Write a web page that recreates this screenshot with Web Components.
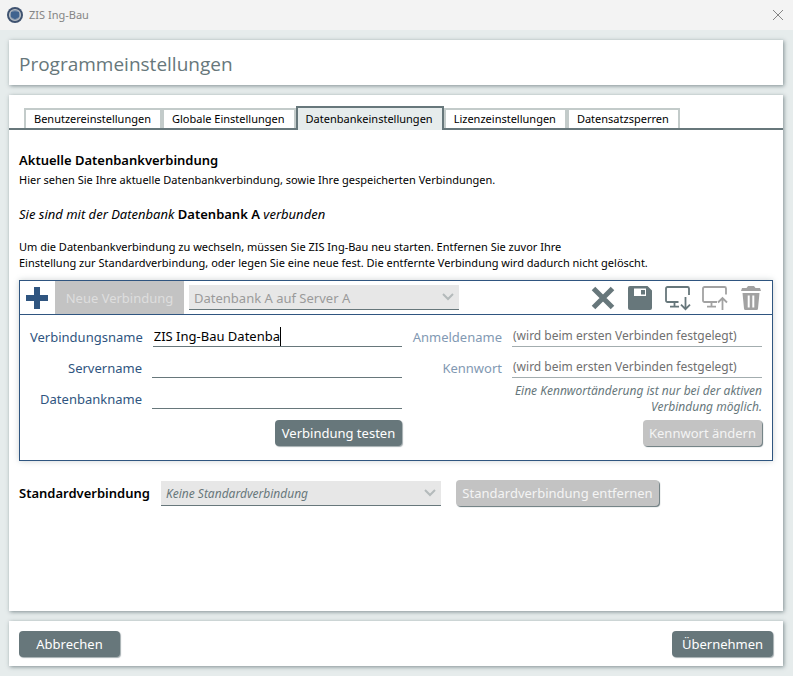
<!DOCTYPE html>
<html lang="de">
<head>
<meta charset="utf-8">
<title>ZIS Ing-Bau</title>
<style>
    :root {
        --slate: #67777b;
        --blue: #2f5580;
        --surface: #e6ecec;
        --disabled: #c3c3c3;
    }
    html, body { height: 100%; }
    body {
        margin: 0;
        background: var(--surface);
        color: #000;
        font: 11px/16px "Noto Sans", "Open Sans", sans-serif;
    }
</style>
</head>
<body>
<zis-app></zis-app>
<script>
const icons = {
    plus: '<path d="M9 1h6v8h8v6h-8v8H9v-8H1V9h8z" fill="currentColor"/>',
    cross: '<path d="M2.500 2.500l19 19M21.500 2.500l-19 19" stroke="currentColor" stroke-width="5" fill="none"/>',
    save: '<path fill="currentColor" fill-rule="evenodd" d="M2 0h17.500L24 4.500V22a2 2 0 0 1-2 2H2a2 2 0 0 1-2-2V2a2 2 0 0 1 2-2zM6 2.500V10h12V2.500zM13 4h4v4.500h-4z"/>',
    download: '<path d="M13.500 16H2.500a1.500 1.500 0 0 1-1.500-1.500v-12A1.500 1.500 0 0 1 2.500 1h20A1.500 1.500 0 0 1 24 2.500V9M9.500 16v4.500M5 20.700h9M20.500 11v12M16 18.700l4.500 4.500 4.500-4.500" fill="none" stroke="currentColor" stroke-width="1.800"/>',
    upload: '<path d="M15 16H2.500a1.500 1.500 0 0 1-1.500-1.500v-12A1.500 1.500 0 0 1 2.500 1h20A1.500 1.500 0 0 1 24 2.500V8.500M9.500 16v4.500M5 20.700h9M20.500 24V12M16 16.500l4.500-4.500 4.500 4.500" fill="none" stroke="currentColor" stroke-width="1.800"/>',
    trash: '<path fill="currentColor" fill-rule="evenodd" d="M9 0h6l1.500 2H21l1 3H2l1-3h4.500zM3.500 7h17L19 22.500a1.500 1.500 0 0 1-1.500 1.500h-11A1.500 1.500 0 0 1 5 22.500zM8.700 9.500v12h2v-12zM13.300 9.500v12h2v-12z"/>'
};

class ZisElement extends HTMLElement {
    constructor() {
        super();
        this.attachShadow({ mode: 'open' });
    }

    connectedCallback() {
        this.shadowRoot.innerHTML = `
            <style>
                *, *::before { box-sizing: border-box; }
                button, input, select { font: inherit; margin: 0; }
            </style>
            ${this.render()}
        `;
    }

    attr(name) {
        return this.getAttribute(name) || '';
    }

    get disabled() {
        return this.hasAttribute('disabled') ? 'disabled' : '';
    }
}

class ZisTitlebar extends ZisElement {
    render() {
        return `
            <style>
                :host {
                    display: flex;
                    align-items: center;
                    gap: 6px;
                    height: 30px;
                    padding: 0 9px 0 7px;
                    background: #f3f3f3;
                    color: #858585;
                }
                .title { flex: 1; }
                button {
                    display: flex;
                    padding: 0;
                    border: 0;
                    background: none;
                    color: #858585;
                }
            </style>
            <svg width="16" height="16" viewBox="0 0 16 16">
                <circle cx="8" cy="8" r="8" fill="#3e5270"/>
                <circle cx="8" cy="8" r="5.500" fill="#7f93ab" stroke="#b9bfc4" stroke-width="1.200"/>
                <path d="M4 5l4-.8 4 .8v5L8 12.200 4 10z" fill="#3f638f"/>
            </svg>
            <span class="title"><slot></slot></span>
            <button aria-label="Schließen">
                <svg width="12" height="12" viewBox="0 0 12 12">
                    <path d="M1 1l10 10M11 1L1 11" stroke="currentColor"/>
                </svg>
            </button>
        `;
    }
}

class ZisCard extends ZisElement {
    render() {
        return `
            <style>
                :host {
                    display: block;
                    background: #fff;
                    box-shadow: 1px 1px 4px #67777bcc;
                }
            </style>
            <slot></slot>
        `;
    }
}

class ZisTab extends ZisElement {
    render() {
        const selected = this.hasAttribute('selected');
        return `
            <style>
                :host { display: block; }
                :host([selected]) { margin-bottom: -2px; }
                button {
                    display: block;
                    height: 20px;
                    padding: 0 9px 0 8px;
                    border: 2px solid #c3cbca;
                    border-bottom: 0;
                    background: #fff;
                    color: #000;
                    line-height: 18px;
                }
                :host([selected]) button {
                    height: 24px;
                    border-color: var(--slate);
                    background: var(--surface);
                }
            </style>
            <button role="tab" aria-selected="${selected}"><slot></slot></button>
        `;
    }
}

class ZisTabs extends ZisElement {
    render() {
        return `
            <style>
                :host { display: block; }
                div {
                    display: flex;
                    align-items: flex-end;
                    height: 35px;
                    padding: 0 15px;
                    border-bottom: 2px solid var(--slate);
                }
            </style>
            <div role="tablist"><slot></slot></div>
        `;
    }
}

class ZisButton extends ZisElement {
    render() {
        return `
            <style>
                :host {
                    display: inline-block;
                    font-size: 13px;
                }
                button {
                    display: block;
                    width: 100%;
                    height: 26px;
                    padding: 0 5px;
                    border: 0;
                    border-radius: 4px;
                    background: var(--slate);
                    box-shadow: 1px 1px 1px #67777b99;
                    color: #fff;
                    white-space: nowrap;
                }
                button:disabled {
                    background: var(--disabled);
                    box-shadow: 1px 1px 1px var(--slate);
                    color: #f4f4f4;
                }
                :host([flat]) button {
                    height: 33px;
                    border-radius: 0;
                    box-shadow: none;
                    color: #dedede;
                }
            </style>
            <button ${this.disabled}><slot></slot></button>
        `;
    }
}

class ZisIconButton extends ZisElement {
    render() {
        return `
            <style>
                :host { display: block; color: var(--slate); }
                :host([disabled]) { color: #a2a2a2; }
                :host([accent]) { color: var(--blue); }
                button {
                    display: block;
                    padding: 0;
                    border: 0;
                    background: none;
                    color: inherit;
                }
                svg { display: block; overflow: visible; }
            </style>
            <button aria-label="${this.attr('label')}" ${this.disabled}>
                <svg width="24" height="24" viewBox="0 0 24 24">${icons[this.attr('icon')]}</svg>
            </button>
        `;
    }
}

class ZisField extends ZisElement {
    render() {
        const editing = this.hasAttribute('editing');
        return `
            <style>
                :host {
                    --label-width: 112px;
                    display: flex;
                    align-items: center;
                    gap: 10px;
                    height: 31px;
                    color: var(--blue);
                    font-size: 13px;
                }
                label {
                    flex: 0 0 var(--label-width);
                    text-align: right;
                    white-space: nowrap;
                }
                .box {
                    display: flex;
                    flex: 1;
                    align-items: center;
                    min-width: 0;
                    height: 20px;
                    border-bottom: 1px solid var(--slate);
                }
                input {
                    flex: 1;
                    min-width: 0;
                    height: 19px;
                    padding: 0 0 0 1px;
                    border: 0;
                    outline: 0;
                    background: none;
                    color: #000;
                }
                input::placeholder { color: #707070; opacity: 1; }
                :host([disabled]) label { color: #8299b3; }
                :host([disabled]) input { padding-bottom: 2px; font-size: 12px; }
                :host([disabled]) .box { border-color: #a3adaf; }
                :host([editing]) input {
                    flex: none;
                    field-sizing: content;
                }
                .caret {
                    width: 1px;
                    height: 19px;
                    background: #000;
                }
            </style>
            <label for="input">${this.attr('label')}</label>
            <div class="box">
                <input id="input" value="${this.attr('value')}" placeholder="${this.attr('placeholder')}" ${this.disabled}>
                ${editing ? '<span class="caret"></span>' : ''}
            </div>
        `;
    }
}

class ZisSelect extends ZisElement {
    render() {
        const label = this.attr('label');
        return `
            <style>
                :host {
                    display: flex;
                    align-items: center;
                    gap: 11px;
                }
                label { font-size: 13px; font-weight: 600; }
                .box {
                    display: grid;
                    flex: 1;
                    align-items: center;
                    height: 25px;
                    border-bottom: 1px solid var(--slate);
                    background: #e7e7e7;
                }
                select, svg { grid-area: 1 / 1; }
                select {
                    width: 100%;
                    height: 24px;
                    padding: 2px 24px 0 5px;
                    border: 0;
                    background: none;
                    color: var(--select-color, #9a9a9a);
                    font-style: var(--select-style, normal);
                    opacity: 1;
                    appearance: none;
                }
                svg { justify-self: end; margin-right: 5px; }
            </style>
            ${label ? `<label for="select">${label}</label>` : ''}
            <div class="box">
                <select id="select" ${label ? '' : 'aria-label="Verbindung"'} ${this.disabled}>
                    <option>${this.attr('value')}</option>
                </select>
                <svg width="12" height="8" viewBox="0 0 12 8">
                    <path d="M1 1l5 5 5-5" fill="none" stroke="#b4babb" stroke-width="2"/>
                </svg>
            </div>
        `;
    }
}

class ZisConnectionEditor extends ZisElement {
    render() {
        return `
            <style>
                :host {
                    display: block;
                    border: 1px solid var(--blue);
                    box-shadow: 0 0 6px #67777b55;
                }
                header {
                    display: flex;
                    align-items: center;
                    height: 34px;
                    padding: 0 9px 0 5px;
                    border-bottom: 1px solid var(--blue);
                }
                .new { flex: 0 0 129px; margin: 0 5px 0 6px; }
                zis-select { flex: 0 0 270px; font-size: 13px; }
                .tools {
                    display: flex;
                    gap: 13px;
                    margin-left: auto;
                }
                .form {
                    display: grid;
                    grid-template-columns: 372fr 350fr;
                    gap: 10px;
                    padding: 6px 10px 14px;
                }
                .right zis-field { --label-width: 90px; }
                .column {
                    display: flex;
                    flex-direction: column;
                }
                .column zis-button { align-self: flex-end; margin-top: auto; }
                .left zis-button { width: 127px; }
                .right zis-button { width: 119px; }
                p {
                    margin: 0 0 5px auto;
                    max-width: 250px;
                    color: var(--slate);
                    font-size: 12px;
                    font-style: italic;
                    text-align: right;
                }
            </style>
            <header>
                <zis-icon-button icon="plus" label="Hinzufügen" accent></zis-icon-button>
                <zis-button class="new" flat disabled>Neue Verbindung</zis-button>
                <zis-select value="Datenbank A auf Server A" disabled></zis-select>
                <div class="tools">
                    <zis-icon-button icon="cross" label="Verwerfen"></zis-icon-button>
                    <zis-icon-button icon="save" label="Speichern"></zis-icon-button>
                    <zis-icon-button icon="download" label="Importieren"></zis-icon-button>
                    <zis-icon-button icon="upload" label="Exportieren" disabled></zis-icon-button>
                    <zis-icon-button icon="trash" label="Löschen" disabled></zis-icon-button>
                </div>
            </header>
            <div class="form">
                <div class="column left">
                    <zis-field label="Verbindungsname" value="ZIS Ing-Bau Datenba" editing></zis-field>
                    <zis-field label="Servername"></zis-field>
                    <zis-field label="Datenbankname"></zis-field>
                    <zis-button>Verbindung testen</zis-button>
                </div>
                <div class="column right">
                    <zis-field label="Anmeldename" placeholder="(wird beim ersten Verbinden festgelegt)" disabled></zis-field>
                    <zis-field label="Kennwort" placeholder="(wird beim ersten Verbinden festgelegt)" disabled></zis-field>
                    <p>Eine Kennwortänderung ist nur bei der aktiven Verbindung möglich.</p>
                    <zis-button disabled>Kennwort ändern</zis-button>
                </div>
            </div>
        `;
    }
}

class ZisApp extends ZisElement {
    render() {
        return `
            <style>
                :host {
                    display: flex;
                    flex-direction: column;
                    min-height: 100%;
                }
                main {
                    display: flex;
                    flex: 1;
                    flex-direction: column;
                    gap: 10px;
                    padding: 10px 10px 10px 9px;
                }
                h1 {
                    margin: 0;
                    padding: 3px 10px 0;
                    color: var(--slate);
                    font-family: "Open Sans", sans-serif;
                    font-size: 19px;
                    font-weight: 400;
                    line-height: 42px;
                }
                .settings { flex: 1; }
                .content { padding: 20px 10px; }
                h2 {
                    margin: 0;
                    font-size: 13px;
                    font-weight: 600;
                    line-height: 20px;
                }
                p { margin: 0; line-height: 20px; }
                .status {
                    margin: 14px 0 15px;
                    font-size: 13px;
                    font-style: italic;
                }
                .status b { font-style: normal; font-weight: 600; }
                .hint { margin-bottom: 9px; line-height: 16px; }
                .default {
                    display: flex;
                    align-items: center;
                    gap: 15px;
                    margin-top: 19px;
                }
                .default zis-select {
                    --select-color: var(--slate);
                    --select-style: italic;
                    flex: 0 0 422px;
                    font-size: 12px;
                }
                .default zis-button { flex: 0 0 203px; }
                .actions {
                    display: flex;
                    justify-content: space-between;
                    padding: 10px 10px 9px;
                }
                .actions zis-button { width: 101px; }
            </style>
            <zis-titlebar>ZIS Ing-Bau</zis-titlebar>
            <main>
                <zis-card><h1>Programmeinstellungen</h1></zis-card>
                <zis-card class="settings">
                    <zis-tabs>
                        <zis-tab>Benutzereinstellungen</zis-tab>
                        <zis-tab>Globale Einstellungen</zis-tab>
                        <zis-tab selected>Datenbankeinstellungen</zis-tab>
                        <zis-tab>Lizenzeinstellungen</zis-tab>
                        <zis-tab>Datensatzsperren</zis-tab>
                    </zis-tabs>
                    <div class="content">
                        <h2>Aktuelle Datenbankverbindung</h2>
                        <p>Hier sehen Sie Ihre aktuelle Datenbankverbindung, sowie Ihre gespeicherten Verbindungen.</p>
                        <p class="status">Sie sind mit der Datenbank <b>Datenbank A</b> verbunden</p>
                        <p class="hint">
                            Um die Datenbankverbindung zu wechseln, müssen Sie ZIS Ing-Bau neu starten. Entfernen Sie zuvor Ihre<br>
                            Einstellung zur Standardverbindung, oder legen Sie eine neue fest. Die entfernte Verbindung wird dadurch nicht gelöscht.
                        </p>
                        <zis-connection-editor></zis-connection-editor>
                        <div class="default">
                            <zis-select label="Standardverbindung" value="Keine Standardverbindung" disabled></zis-select>
                            <zis-button disabled>Standardverbindung entfernen</zis-button>
                        </div>
                    </div>
                </zis-card>
                <zis-card>
                    <div class="actions">
                        <zis-button>Abbrechen</zis-button>
                        <zis-button>Übernehmen</zis-button>
                    </div>
                </zis-card>
            </main>
        `;
    }
}

customElements.define('zis-titlebar', ZisTitlebar);
customElements.define('zis-card', ZisCard);
customElements.define('zis-tab', ZisTab);
customElements.define('zis-tabs', ZisTabs);
customElements.define('zis-button', ZisButton);
customElements.define('zis-icon-button', ZisIconButton);
customElements.define('zis-field', ZisField);
customElements.define('zis-select', ZisSelect);
customElements.define('zis-connection-editor', ZisConnectionEditor);
customElements.define('zis-app', ZisApp);
</script>
</body>
</html>
